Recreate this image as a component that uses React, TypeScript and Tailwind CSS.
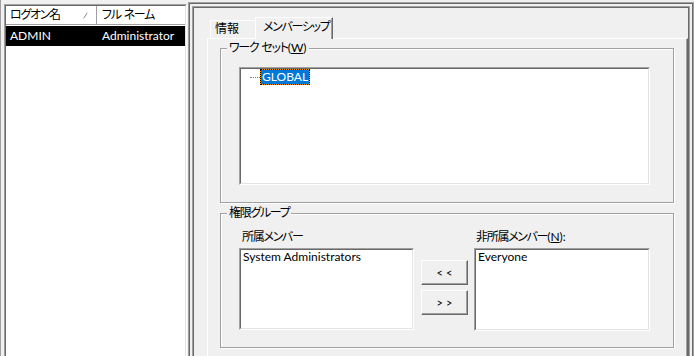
import React from 'react';

type BoxProps = { className?: string; children?: React.ReactNode };

const FONT = { fontFamily: 'Lato, "Noto Sans CJK JP", "Noto Sans", sans-serif' };

// classic 3D sunken edge (list boxes)
const Sunken = ({ className = '', children }: BoxProps) => (
  <div className={`border border-t-[#a0a0a0] border-l-[#a0a0a0] border-r-white border-b-white ${className}`}>
    <div className="h-full border border-t-[#696969] border-l-[#696969] border-r-[#e3e3e3] border-b-[#e3e3e3] bg-white">
      {children}
    </div>
  </div>
);

// double dark frame around the panes
const Frame = ({ className = '', children }: BoxProps) => (
  <div className={`border border-[#a0a0a0] ${className}`}>
    <div className="h-full border border-[#696969]">{children}</div>
  </div>
);

// kana runs are set tighter, like Meiryo UI
const Jp = ({ children }: BoxProps) => <span className="tracking-[-1.3px]">{children}</span>;

const Group = ({ title, className = '', children }: BoxProps & { title: React.ReactNode }) => (
  <div className={`relative border border-[#a0a0a0] shadow-[1px_1px_0_#fff,inset_1px_1px_0_#fff] ${className}`}>
    <span className="absolute left-[6px] top-[-8px] whitespace-nowrap bg-[#f0f0f0] px-[2px] leading-[14px]">{title}</span>
    {children}
  </div>
);

const Btn = ({ children }: BoxProps) => (
  <button className="h-[25px] w-[47px] border border-t-white border-l-white border-r-[#696969] border-b-[#696969] bg-[#f0f0f0] pl-[3px] text-[11px] leading-none tracking-[3px] text-black shadow-[inset_-1px_-1px_0_#a0a0a0]">
    {children}
  </button>
);

const SortArrow = () => (
  <svg width="9" height="7" viewBox="0 0 9 7">
    <path d="M0.5 6.5 L4.5 0.5" stroke="#8a8a8a" strokeWidth="1" fill="none" />
    <path d="M4.5 0.5 L8.5 6.5 L0.5 6.5" stroke="#ffffff" strokeWidth="1" fill="none" />
  </svg>
);

export default function App() {
  return (
    <div
      className="flex h-[356px] w-[694px] items-start overflow-hidden bg-[#f0f0f0] text-[12px] leading-[14px] text-black [font-feature-settings:'palt']"
      style={FONT}
    >
      {/* user list */}
      <div className="flex h-[380px] w-[187px] shrink-0 flex-col border-l border-[#a0a0a0] pl-[3px] pt-[4px]">
        <Sunken className="flex-1">
          <div className="flex h-[19px]">
            <div className="flex w-[91px] items-center justify-between border-r border-b border-[#a0a0a0] pl-[4px] pr-[4px] shadow-[inset_1px_1px_0_#fff]">
              <Jp>ログオン名</Jp>
              <SortArrow />
            </div>
            <div className="flex w-[88px] items-center border-b border-[#a0a0a0] pl-[5px] shadow-[inset_1px_1px_0_#fff]">
              <span className="whitespace-pre">
                <Jp>フル</Jp> <Jp>ネーム</Jp>
              </span>
            </div>
          </div>
          <div className="mt-[1px] flex h-[20px] items-center bg-black text-white">
            <div className="w-[91px] pl-[4px]">ADMIN</div>
            <div className="pl-[5px]">Administrator</div>
          </div>
        </Sunken>
      </div>

      {/* detail pane */}
      <div className="flex h-[380px] flex-1 flex-col pl-[1px] pt-[2px]">
        <Frame className="flex-1">
          <div className="h-full p-[2px]">
            <Frame className="h-full">
              <div className="flex h-full flex-col pl-[13px] pt-[9px]">
                <div className="flex h-[21px] items-end pl-[3px]">
                  <div className="h-[18px] w-[45px] border-t border-l border-white pl-[4px] pt-[1px]">情報</div>
                  <div className="relative z-10 -mb-[1px] h-[22px] w-[78px] whitespace-nowrap border-t border-l border-r border-t-white border-l-white border-r-[#696969] bg-[#f0f0f0] pl-[7px] pt-[2px] shadow-[inset_-1px_0_0_#a0a0a0]">
                    <Jp>メンバーシップ</Jp>
                  </div>
                </div>
                <div className="flex-1 border border-t-white border-l-white border-r-[#696969] border-b-[#696969] pl-[12px] pt-[9px] shadow-[inset_-1px_-1px_0_#a0a0a0]">
                  <Group
                    title={
                      <>
                        <Jp>ワーク</Jp>{' '}<Jp>セット</Jp>(<span className="underline">W</span>)
                      </>
                    }
                    className="w-[454px] pl-[18px] pt-[18px] pb-[17px]"
                  >
                    <Sunken className="h-[118px] w-[411px]">
                      <div className="flex items-center pl-[9px]">
                        <span className="w-[10px] border-t border-dotted border-[#808080]" />
                        <span className="bg-[#ff9900]">
                          <span className="block border border-dotted border-black bg-[#0078d7] bg-clip-padding px-[1px] text-white">
                            GLOBAL
                          </span>
                        </span>
                      </div>
                    </Sunken>
                  </Group>

                  <Group title={<Jp>権限グループ</Jp>} className="mt-[10px] flex w-[454px] pl-[18px] pt-[16px] pb-[16px]">
                    <div>
                      <div className="mb-[4px] pl-[3px]">
                        <Jp>所属メンバー</Jp>
                      </div>
                      <Sunken className="h-[82px] w-[175px]">
                        <div className="pl-[2px]">System Administrators</div>
                      </Sunken>
                    </div>
                    <div className="ml-[7px] flex flex-col gap-[5px] pt-[30px]">
                      <Btn>&lt;&lt;</Btn>
                      <Btn>&gt;&gt;</Btn>
                    </div>
                    <div className="ml-[6px]">
                      <div className="mb-[4px] pl-[2px]">
                        <Jp>非所属メンバー</Jp>(<span className="underline">N</span>):
                      </div>
                      <Sunken className="h-[83px] w-[176px]">
                        <div className="pl-[2px]">Everyone</div>
                      </Sunken>
                    </div>
                  </Group>
                </div>
              </div>
            </Frame>
          </div>
        </Frame>
      </div>
    </div>
  );
}
